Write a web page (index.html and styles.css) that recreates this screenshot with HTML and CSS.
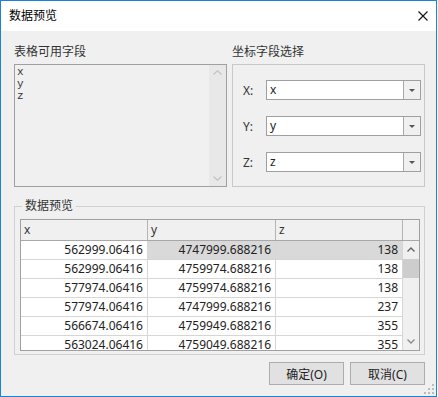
FILE: index.html
```html
<!DOCTYPE html>
<html lang="zh-CN">
<head>
  <meta charset="UTF-8">
  <title>数据预览</title>
  <link rel="stylesheet" href="styles.css">
</head>
<body>
<div class="window">
  <div class="titlebar">
    <span class="title">数据预览</span>
    <svg class="close" width="10" height="10" viewBox="0 0 10 10">
      <path d="M0.5 0.5 L9.5 9.5 M9.5 0.5 L0.5 9.5" stroke="#111" stroke-width="1.1" fill="none"/>
    </svg>
  </div>

  <div class="content">
    <div class="top">
      <!-- 可用字段 -->
      <div class="fields">
        <div class="label">表格可用字段</div>
        <div class="listbox">
          <div class="items">
            <div>x</div>
            <div>y</div>
            <div>z</div>
          </div>
          <div class="list-scroll">
            <svg width="9" height="5" viewBox="0 0 9 5"><polyline points="0.5,4.5 4.5,0.8 8.5,4.5" stroke="#c4c4c4" stroke-width="1.3" fill="none"/></svg>
            <svg width="9" height="5" viewBox="0 0 9 5"><polyline points="0.5,0.5 4.5,4.2 8.5,0.5" stroke="#c4c4c4" stroke-width="1.3" fill="none"/></svg>
          </div>
        </div>
      </div>

      <!-- 坐标字段 -->
      <div class="coords">
        <div class="label">坐标字段选择</div>
        <div class="coord-box">
          <div class="coord-row">
            <span class="axis">X:</span>
            <div class="combo"><span class="combo-text">x</span><span class="combo-btn"><i class="tri"></i></span></div>
          </div>
          <div class="coord-row">
            <span class="axis">Y:</span>
            <div class="combo"><span class="combo-text">y</span><span class="combo-btn"><i class="tri"></i></span></div>
          </div>
          <div class="coord-row">
            <span class="axis">Z:</span>
            <div class="combo"><span class="combo-text">z</span><span class="combo-btn"><i class="tri"></i></span></div>
          </div>
        </div>
      </div>
    </div>

    <!-- 数据预览 -->
    <fieldset class="preview">
      <legend>数据预览</legend>
      <div class="grid">
        <div class="grid-head">
          <div class="hcell">x</div>
          <div class="hcell">y</div>
          <div class="hcell">z</div>
          <div class="hcell corner"></div>
        </div>
        <div class="grid-body">
          <div class="rows">
            <div class="row"><div class="cell">562999.06416</div><div class="cell sel">4747999.688216</div><div class="cell sel">138</div></div>
            <div class="row"><div class="cell">562999.06416</div><div class="cell">4759974.688216</div><div class="cell">138</div></div>
            <div class="row"><div class="cell">577974.06416</div><div class="cell">4759974.688216</div><div class="cell">138</div></div>
            <div class="row"><div class="cell">577974.06416</div><div class="cell">4747999.688216</div><div class="cell">237</div></div>
            <div class="row"><div class="cell">566674.06416</div><div class="cell">4759949.688216</div><div class="cell">355</div></div>
            <div class="row"><div class="cell">563024.06416</div><div class="cell">4759049.688216</div><div class="cell">355</div></div>
          </div>
          <div class="grid-scroll">
            <div class="sb-btn">
              <svg width="8" height="5" viewBox="0 0 8 5"><polyline points="0.5,4.5 4,1 7.5,4.5" stroke="#606060" stroke-width="1.3" fill="none"/></svg>
            </div>
            <div class="sb-thumb"></div>
            <div class="sb-track"></div>
            <div class="sb-btn">
              <svg width="8" height="5" viewBox="0 0 8 5"><polyline points="0.5,0.5 4,4 7.5,0.5" stroke="#8a8a8a" stroke-width="1.3" fill="none"/></svg>
            </div>
          </div>
        </div>
      </div>
    </fieldset>

    <div class="buttons">
      <button class="btn">确定(O)</button>
      <button class="btn">取消(C)</button>
    </div>
  </div>

  <!-- 右下角拖拽手柄 -->
  <svg class="grip" width="11" height="11" viewBox="0 0 11 11">
    <rect x="8" y="0" width="2" height="2" fill="#bcbcbc"/>
    <rect x="4" y="4" width="2" height="2" fill="#bcbcbc"/>
    <rect x="8" y="4" width="2" height="2" fill="#bcbcbc"/>
    <rect x="0" y="8" width="2" height="2" fill="#bcbcbc"/>
    <rect x="4" y="8" width="2" height="2" fill="#bcbcbc"/>
    <rect x="8" y="8" width="2" height="2" fill="#bcbcbc"/>
  </svg>
</div>
</body>
</html>
```

FILE: styles.css
```css
* {
  margin: 0;
  padding: 0;
  box-sizing: border-box;
}
body {
  background: #ffffff;
  font-family: "Noto Sans", "Noto Sans CJK SC", sans-serif;
  font-size: 12px;
  color: #222;
}
.window {
  position: relative;
  width: 437px;
  height: 397px;
  border: 1px solid #1883d7;
  background: #f0f0f0;
  display: flex;
  flex-direction: column;
}

/* Заголовок окна */
.titlebar {
  height: 30px;
  background: #ffffff;
  display: flex;
  align-items: center;
  justify-content: space-between;
  padding: 0 8px 0 8px;
}
.title {
  font-size: 12px;
  line-height: 16px;
  color: #000;
}

.content {
  padding: 13px 11px 0 13px;
  display: flex;
  flex-direction: column;
}
.top {
  display: flex;
  gap: 5px;
}
.label {
  line-height: 16px;
  height: 16px;
  margin-bottom: 4px;
  color: #333;
}
.fields {
  width: 213px;
}
.coords {
  width: 193px;
}

/* Список полей */
.listbox {
  height: 123px;
  border: 1px solid #a0a0a0;
  background: #f0f0f0;
  display: flex;
}
.items {
  flex: 1;
  padding: 1px 0 0 2px;
  font-family: "Liberation Mono", monospace;
  font-size: 11px;
  line-height: 12px;
  color: #333;
}
.list-scroll {
  width: 17px;
  background: #e8e8e8;
  display: flex;
  flex-direction: column;
  align-items: center;
  justify-content: space-between;
  padding: 5px 0 5px;
}

/* Координаты */
.coord-box {
  height: 123px;
  border: 1px solid #c8c8c8;
  padding: 15px 3px 0 10px;
  display: flex;
  flex-direction: column;
  gap: 16px;
}
.coord-row {
  display: flex;
  align-items: center;
  height: 20px;
}
.axis {
  width: 23px;
  color: #333;
}
.combo {
  width: 155px;
  height: 20px;
  border: 1px solid #a0a0a0;
  background: #ffffff;
  display: flex;
}
.combo-text {
  flex: 1;
  padding-left: 3px;
  line-height: 17px;
  font-size: 12px;
  color: #222;
}
.combo-btn {
  width: 17px;
  border-left: 1px solid #a8a8a8;
  background: #f0f0f0;
  display: flex;
  align-items: center;
  justify-content: center;
}
.tri {
  width: 0;
  height: 0;
  border-left: 3px solid transparent;
  border-right: 3px solid transparent;
  border-top: 3px solid #555;
}

/* Предпросмотр данных */
.preview {
  margin-top: 11px;
  border: 1px solid #d0d0d0;
  padding: 5px 4px 3px 5px;
  min-inline-size: 0;
}
.preview legend {
  margin-left: 2px;
  padding: 0 3px;
  line-height: 16px;
  color: #333;
}
.grid {
  width: 400px;
  height: 132px;
  border: 1px solid #a0a0a0;
  background: #ffffff;
  display: flex;
  flex-direction: column;
}
.grid-head {
  display: flex;
  height: 21px;
  border-bottom: 1px solid #a8a8a8;
  background: #f0f0f0;
}
.hcell {
  width: 127px;
  border-right: 1px solid #b4b4b4;
  padding-left: 3px;
  line-height: 19px;
  color: #333;
}
.hcell:nth-child(2) {
  width: 128px;
}
.hcell.corner {
  width: 16px;
  border-right: none;
}
.grid-body {
  flex: 1;
  display: flex;
  overflow: hidden;
}
.rows {
  width: 382px;
}
.row {
  display: flex;
  height: 19px;
  border-bottom: 1px solid #d6d6d6;
}
.cell {
  width: 127px;
  border-right: 1px solid #d6d6d6;
  text-align: right;
  padding-right: 4px;
  line-height: 18px;
  color: #222;
}
.cell:nth-child(2) {
  width: 128px;
}
.cell.sel {
  background: #d9d9d9;
}
.grid-scroll {
  width: 16px;
  background: #f0f0f0;
  display: flex;
  flex-direction: column;
}
.sb-btn {
  height: 17px;
  display: flex;
  align-items: center;
  justify-content: center;
}
.sb-thumb {
  margin-top: 1px;
  height: 19px;
  background: #cdcdcd;
}
.sb-track {
  flex: 1;
}

/* Кнопки */
.buttons {
  margin-top: 7px;
  display: flex;
  justify-content: flex-end;
  gap: 6px;
}
.btn {
  width: 75px;
  height: 23px;
  border: 1px solid #adadad;
  background: #e1e1e1;
  font-family: "Noto Sans", "Noto Sans CJK SC", sans-serif;
  font-size: 12px;
  color: #222;
}

.grip {
  position: absolute;
  right: 1px;
  bottom: 1px;
}
```
